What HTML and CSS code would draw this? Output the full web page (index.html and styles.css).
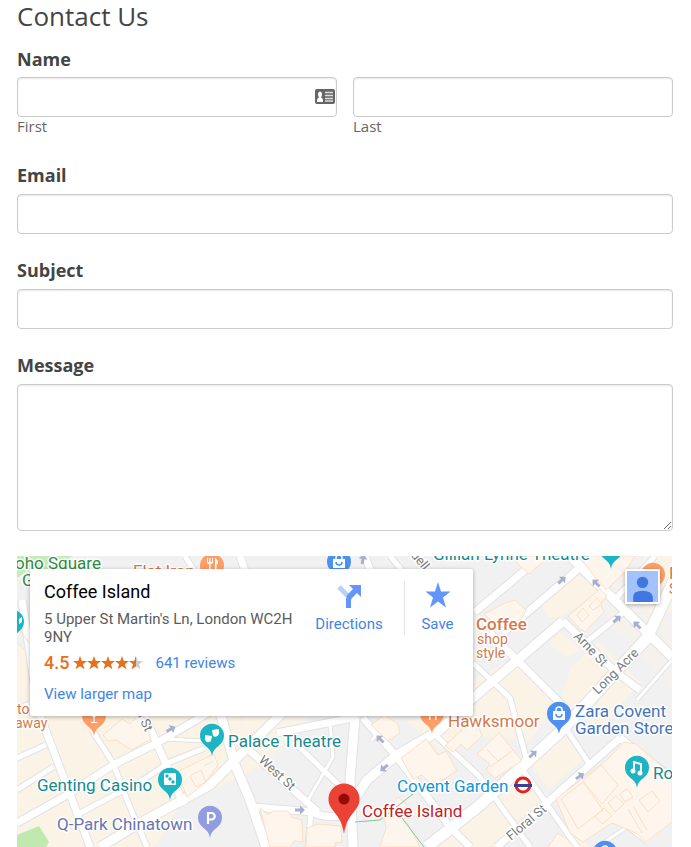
FILE: index.html
```html
<!DOCTYPE html>
<html lang="en">
  <head>
    <meta charset="UTF-8" />
    <meta name="viewport" content="width=device-width, initial-scale=1.0" />
    <title>Contact Us</title>
    <link rel="stylesheet" href="styles.css">
  </head>
  <body>
    <main class="page">
      <h1>Contact Us</h1>
      <form class="contact-form">
        <fieldset class="field">
          <legend>Name</legend>
          <div class="name-row">
            <div class="name-part">
              <input type="text" id="first" name="first" />
              <svg class="contact-icon" viewBox="0 0 20 15" aria-hidden="true">
                <rect width="20" height="15" rx="2" fill="#666" />
                <path d="M2 13V11Q2 9 4 8.500Q3 7 3 5Q3 2.500 5 2.500T7 5Q7 7 6 8.500Q8 9 8 11V13Z" fill="#fff" />
                <path d="M10 3.500h8M10 6.500h8M10 9.500h8M10 12h8" stroke="#ddd" stroke-width="1.300" />
              </svg>
              <label for="first">First</label>
            </div>
            <div class="name-part">
              <input type="text" id="last" name="last" />
              <label for="last">Last</label>
            </div>
          </div>
        </fieldset>
        <div class="field">
          <label for="email">Email</label>
          <input type="email" id="email" name="email" />
        </div>
        <div class="field">
          <label for="subject">Subject</label>
          <input type="text" id="subject" name="subject" />
        </div>
        <div class="field">
          <label for="message">Message</label>
          <textarea id="message" name="message"></textarea>
        </div>
      </form>

      <section class="map" aria-label="Map">
        <svg class="map-canvas" viewBox="17 556 655 291" preserveAspectRatio="xMinYMin slice">
          <defs>
            <path id="pin" d="M0 20C-1 14-3 13-7.500 9A12 12 0 1 1 7.500 9C3 13 1 14 0 20Z" />
            <path id="arrow" d="M-5 -1.500H0V-4.500L5 0L0 4.500V1.500H-5Z" />
            <g id="bag">
              <path d="M-6 -3H6V6H-6Z" fill="#fff" />
              <path d="M-3 -3V-4A3 3 0 0 1 3 -4V-3" fill="none" stroke="#fff" stroke-width="1.500" />
              <path d="M-3 0A3 3 0 0 0 3 0" fill="none" stroke="#4d90f0" stroke-width="1.500" />
            </g>
            <path id="fork" d="M-5 -6V-2Q-5 0-3 0V6H-1.500V0Q1 0 1 -2V-6H0V-2H-1.500V-6H-3V-2H-4V-6ZM3 -6Q6 -5 6 0H4.500V6H3Z" fill="#fff" />
          </defs>

          <!-- land -->
          <rect x="17" y="556" width="655" height="291" fill="#f1f1f2" />
          <g fill="#faf3e6">
            <path d="M17 640L30 655V700H235L255 770L180 805L155 847H17Z" />
            <path d="M242 717H310L262 765L244 775Z" />
            <path d="M541 606L576 574L604 592L560 617L548 617Z" />
            <path d="M560 632L583 650L566 657L549 644Z" />
            <path d="M571 667L598 642L640 682L600 730L560 700Z" />
            <path d="M473 680L520 656L560 700L530 740L460 735Z" />
            <path d="M526 756L565 732L585 758L548 790Z" />
            <path d="M435 847L525 770L545 800L500 847Z" />
            <path d="M600 600L624 576L672 625V690L612 625Z" opacity=".45" />
            <path d="M645 556H672V610L655 620L630 590Z" />
            <path d="M548 847L570 828L590 847Z" />
            <path d="M390 720H470L440 750L405 720Z" />
          </g>
          <path d="M17 835L39 826L49 842L46 847H17Z" fill="#bfe9ae" />
          <path d="M17 556H72L60 569H30L17 578Z" fill="#c8ebba" />

          <!-- roads, casing under the white fill -->
          <g class="road-edge">
            <path class="w4" d="M330 723L333 757L308 800M637 700L672 660M600 845L627 827L647 842M165 739L205 741M372 740L385 725" />
            <path class="w6" d="M17 758L46 745M17 790L53 767M80 813L143 780L170 762L205 748M297 745L342 788M433 733L480 777L530 847M523 770L577 847M567 730L590 765M473 663L510 698L528 765M92 730L113 763L127 800L147 847M308 847L311 812M583 645L625 611M617 597L655 556M185 556L200 580M390 556L410 580" />
            <path class="w8" d="M17 710L30 705M22 600L38 710L90 847M143 712L184 805M17 823L67 795L113 765L157 743L230 700M240 742L318 812M253 807L313 812Q325 820 350 814M277 733L357 717M363 718L397 757L450 827L470 847M475 612L542 556M503 633L583 565M490 633L563 706M563 621L617 673L640 690M497 847L620 738M620 738L672 778M365 556L372 575M240 556L248 580" />
            <path class="w10" d="M100 847L140 823L210 785L232 763L290 705M220 712L235 765L250 800L266 847M355 717L350 780L353 847M354 800L367 780L397 755L440 730L473 698L563 621M567 553L672 657" />
            <path class="w12" d="M427 847L480 805L560 732L590 700L647 638L675 578" />
          </g>
          <g class="road">
            <path class="w4" d="M330 723L333 757L308 800M637 700L672 660M600 845L627 827L647 842M165 739L205 741M372 740L385 725" />
            <path class="w6" d="M17 758L46 745M17 790L53 767M80 813L143 780L170 762L205 748M297 745L342 788M433 733L480 777L530 847M523 770L577 847M567 730L590 765M473 663L510 698L528 765M92 730L113 763L127 800L147 847M308 847L311 812M583 645L625 611M617 597L655 556M185 556L200 580M390 556L410 580" />
            <path class="w8" d="M17 710L30 705M22 600L38 710L90 847M143 712L184 805M17 823L67 795L113 765L157 743L230 700M240 742L318 812M253 807L313 812Q325 820 350 814M277 733L357 717M363 718L397 757L450 827L470 847M475 612L542 556M503 633L583 565M490 633L563 706M563 621L617 673L640 690M497 847L620 738M620 738L672 778M365 556L372 575M240 556L248 580" />
            <path class="w10" d="M100 847L140 823L210 785L232 763L290 705M220 712L235 765L250 800L266 847M355 717L350 780L353 847M354 800L367 780L397 755L440 730L473 698L563 621M567 553L672 657" />
            <path class="w12" d="M427 847L480 805L560 732L590 700L647 638L675 578" />
          </g>

          <!-- buildings -->
          <g class="building">
            <path d="M103 735L122 719L130 724L137 717H144L151 739L132 750L122 744L117 740L108 741Z" />
            <path d="M181 782L177 772L214 754L218 765L205 783L187 797Z" />
            <path d="M190 776L201 770L206 782L196 787ZM204 766L213 761" />
            <path d="M260 808L268 815L273 811L288 811L291 817L302 820L303 842L294 841L290 847H270Z" />
            <path d="M307 828L318 824L341 826L342 842L335 843V847H306Z" />
            <path d="M371 725L384 715L398 724L400 733L388 741Z" />
            <path d="M401 758L426 739L438 755L446 751L457 771L433 786L422 775L413 779Z" />
            <path d="M445 746L475 717L482 736L467 750L461 744L453 752Z" />
            <path d="M384 815L398 797L412 810L404 818L420 847H380L386 828Z" />
            <path d="M477 754L499 733L522 761L495 778L486 770L490 764Z" />
            <path d="M487 750L498 761L507 755M490 767L513 750" />
            <path d="M484 614L505 603L515 600L526 610L522 618L503 631Z" />
            <path d="M515 556H548L543 562L529 574L517 563Z" />
            <path d="M579 556H635L625 572L606 590L597 580Z" />
            <path d="M568 616L600 589L607 596L600 604L604 612L585 632L579 628Z" />
            <path d="M577 615L583 608L589 615L582 622ZM589 606L597 598L602 604L593 610Z" />
            <path d="M556 799L607 760L624 742L636 744L672 775V822L646 842L636 833L612 823L583 842L570 833Z" />
            <path d="M561 799L583 782L603 810L578 829ZM583 781L601 765L618 785L602 804ZM595 816L604 808L612 816L602 824ZM608 803L616 796L624 804L615 812ZM620 794L627 789L633 797L625 802ZM639 800L652 791L660 801L648 812ZM628 809L642 833M633 806L647 830" />
            <path d="M548 847L558 833L567 839L574 847" />
            <path d="M17 642L25 650M20 630L29 643" />
          </g>
          <path d="M355 822L380 820L413 794M402 818L424 847" fill="none" stroke="#82c99b" />

          <g fill="#a9afd0">
            <use href="#arrow" transform="translate(562 580) rotate(-42)" />
            <use href="#arrow" transform="translate(596 583) rotate(-135)" />
            <use href="#arrow" transform="translate(617 619) rotate(-42)" />
            <use href="#arrow" transform="translate(637 625) rotate(-135)" />
            <use href="#arrow" transform="translate(171 729) rotate(-28)" />
            <use href="#arrow" transform="translate(380 739) rotate(-135)" />
            <use href="#arrow" transform="translate(384 768) rotate(140)" />
            <use href="#arrow" transform="translate(300 810)" />
            <use href="#arrow" transform="translate(533 754) rotate(-42)" />
            <use href="#arrow" transform="translate(580 776) rotate(-35)" />
            <use href="#arrow" transform="translate(363 559) rotate(-80)" />
          </g>

          <!-- street names -->
          <g class="label street">
            <text transform="translate(258 761) rotate(43)">West St</text>
            <text transform="translate(573 637) rotate(46)">Arne St</text>
            <text transform="translate(598 695) rotate(-45)">Long Acre</text>
            <text transform="translate(511 841) rotate(-40)">Floral St</text>
            <text transform="translate(128 695) rotate(65)">Frith St</text>
            <text transform="translate(401 544) rotate(50)">Endell</text>
          </g>

          <!-- pins -->
          <g fill="#1cb5c4">
            <use href="#pin" x="212" y="736" />
            <use href="#pin" x="170" y="780" />
            <use href="#pin" x="637" y="768" />
            <use href="#pin" x="611" y="549" />
            <use href="#pin" x="12" y="622" />
          </g>
          <g fill="#ff9e67">
            <use href="#pin" x="94" y="716" />
            <use href="#pin" x="432" y="714" />
            <use href="#pin" x="212" y="566" />
            <use href="#pin" x="653" y="575" />
          </g>
          <g fill="#4d90f0">
            <use href="#pin" x="559" y="714" />
            <use href="#pin" x="339" y="562" />
            <use href="#pin" x="605" y="853" />
          </g>
          <use href="#pin" x="210" y="818" fill="#919ce1" />
          <use href="#bag" x="559" y="714" />
          <use href="#bag" x="339" y="562" />
          <use href="#bag" x="605" y="853" />
          <use href="#fork" x="212" y="564" />
          <use href="#fork" x="432" y="714" />
          <use href="#fork" x="653" y="575" />
          <path d="M90 714H98L94.500 718V722H97V723H91V722H93.500V718Z" fill="#fff" />
          <path d="M205 735L212 736L211 741Q207 744 205 740ZM212 730L219 729V734Q217 738 213 736Z" fill="#fff" />
          <rect x="164" y="773" width="12" height="12" rx="1" fill="#fff" />
          <g fill="#1cb5c4">
            <circle cx="167" cy="776" r="1.700" />
            <circle cx="170" cy="779" r="1.700" />
            <circle cx="173" cy="782" r="1.700" />
          </g>
          <path d="M634 771V762L641 764V773" fill="none" stroke="#fff" stroke-width="2" />
          <circle cx="633" cy="771" r="2.500" fill="#fff" />
          <circle cx="640" cy="773" r="2.500" fill="#fff" />
          <path d="M208 824V813H211.500A3 3 0 0 1 211.500 819.500H208" fill="none" stroke="#fff" stroke-width="2.200" />
          <path d="M19 619L22 617V622L19 624Z" fill="#fff" />

          <circle cx="523" cy="785" r="7" fill="#fff" stroke="#e32119" stroke-width="3" />
          <rect x="514" y="784" width="18" height="3" fill="#3a3f93" />

          <!-- place names -->
          <g class="label">
            <text x="15" y="569" class="park">oho Square</text>
            <text x="22" y="586" class="park">G</text>
            <text x="133" y="577" class="food">Flat Iron</text>
            <text x="433" y="560" class="culture">Gillian Lynne Theatre</text>
            <text x="476" y="630" class="food strong">Coffee</text>
            <text x="477" y="644" class="food small">shop</text>
            <text x="476" y="658" class="food small">style</text>
            <text x="669" y="579" class="food">F</text>
            <text x="669" y="594" class="food small">S</text>
            <text x="17" y="714" class="food small">to</text>
            <text x="15" y="728" class="food small">away</text>
            <text x="448" y="727" class="food">Hawksmoor</text>
            <text x="575" y="717" class="shop">Zara Covent</text>
            <text x="575" y="734" class="shop">Garden Store</text>
            <text x="228" y="747" class="culture">Palace Theatre</text>
            <text x="37" y="791" class="culture">Genting Casino</text>
            <text x="653" y="779" class="culture">Royal</text>
            <text x="57" y="830" class="parking">Q-Park Chinatown</text>
            <text x="397" y="792" class="station">Covent Garden</text>
            <text x="362" y="817" class="selected">Coffee Island</text>
          </g>

          <path d="M344 834C342 820 337 816 332 809C329 805 328.500 802 328.500 799A15.500 15.500 0 0 1 359.500 799C359.500 802 359 805 356 809C351 816 346 820 344 834Z" fill="#ea4335" />
          <circle cx="344" cy="799" r="5.500" fill="#960a0a" />
        </svg>

        <div class="place-card">
          <div class="place-info">
            <h2>Coffee Island</h2>
            <p class="address">5 Upper St Martin's Ln, London WC2H 9NY</p>
            <div class="rating">
              <strong>4.5</strong>
              <svg class="stars" viewBox="0 0 70 14" aria-label="4.5 stars">
                <defs>
                  <path id="star" d="M7 0L8.800 4.900L14 5L9.900 8.200L11.400 13.200L7 10.300L2.600 13.200L4.100 8.200L0 5L5.200 4.900Z" />
                </defs>
                <use href="#star" fill="#e7711b" />
                <use href="#star" x="14" fill="#e7711b" />
                <use href="#star" x="28" fill="#e7711b" />
                <use href="#star" x="42" fill="#e7711b" />
                <use href="#star" x="56" fill="#ccc" />
                <path d="M63 0V10.300L58.600 13.200L60.100 8.200L56 5L61.200 4.900Z" fill="#e7711b" />
              </svg>
              <a href="#">641 reviews</a>
            </div>
            <a href="#">View larger map</a>
          </div>
          <a class="action directions" href="#">
            <svg viewBox="0 0 26 26" aria-hidden="true">
              <path d="M3 5L12 14" stroke="#b9d0fb" stroke-width="5" />
              <path d="M10 26V17Q10 14 12 12L17 7L13 3H25V15L21 11L16 16Q15 17 15 19V26Z" fill="#6495fb" />
            </svg>
            Directions
          </a>
          <a class="action save" href="#">
            <svg viewBox="0 0 26 26" aria-hidden="true">
              <path d="M13 0L16 9.500H25.500L18 15.500L21 25.500L13 19.500L5 25.500L8 15.500L0.500 9.500H10Z" fill="#6495fb" />
            </svg>
            Save
          </a>
        </div>

        <button class="account" type="button" aria-label="Account">
          <svg viewBox="0 0 30 30" aria-hidden="true">
            <circle cx="15" cy="11" r="5.500" fill="#3f76e0" />
            <path d="M6 30V25Q6 19 15 19T25 25V30Z" fill="#3f76e0" />
          </svg>
        </button>
      </section>
    </main>
  </body>
</html>
```
FILE: styles.css
```css
* {
  box-sizing: border-box;
}

body {
  margin: 0;
  background: #fff;
  color: #444;
  font-family: "Open Sans", "Noto Sans", sans-serif;
}

.page {
  padding: 0 18px 0 17px;
}

h1 {
  margin: 0 0 16px;
  font-size: 26px;
  font-weight: 400;
  line-height: 32px;
}

.contact-form {
  display: flex;
  flex-direction: column;
  gap: 25px;
}

.field {
  display: flex;
  flex-direction: column;
  min-width: 0;
  margin: 0;
  padding: 0;
  border: 0;
}

.field > label,
.field legend {
  margin-bottom: 8px;
  padding: 0;
  font-size: 18px;
  font-weight: 700;
  line-height: 22px;
}

.field legend {
  margin-bottom: 7px;
}

.name-row {
  display: grid;
  grid-template-columns: 1fr 1fr;
  gap: 16px;
  padding-bottom: 4px;
}

.name-part {
  position: relative;
  display: flex;
  flex-direction: column;
}

.name-part label {
  color: #666;
  font-size: 15px;
  line-height: 18px;
}

.contact-icon {
  position: absolute;
  top: 12px;
  right: 2px;
  width: 20px;
  height: 15px;
}

input,
textarea {
  width: 100%;
  height: 40px;
  padding: 8px;
  border: 1px solid #ccc;
  border-radius: 4px;
  background: #fff;
  box-shadow: inset 0 1px 2px rgba(0, 0, 0, 0.1);
  font: inherit;
}

textarea {
  display: block;
  height: 147px;
  resize: vertical;
}

/* map */
.map {
  position: relative;
  height: 291px;
  margin: 25px 1px 0 0;
  overflow: hidden;
  font-family: Roboto, sans-serif;
}

.map-canvas {
  display: block;
  width: 100%;
  height: 100%;
}

.road,
.road-edge {
  fill: none;
  stroke: #fff;
  stroke-linejoin: round;
}

.road .w4 { stroke-width: 3px; }
.road .w6 { stroke-width: 5px; }
.road .w8 { stroke-width: 7px; }
.road .w10 { stroke-width: 9px; }
.road .w12 { stroke-width: 11px; }

.road-edge { stroke: #e2e2e5; }
.road-edge .w4 { stroke-width: 5px; }
.road-edge .w6 { stroke-width: 7px; }
.road-edge .w8 { stroke-width: 9px; }
.road-edge .w10 { stroke-width: 11px; }
.road-edge .w12 { stroke-width: 13px; }

.building {
  fill: #fef5ec;
  stroke: #fddfc3;
}

.label {
  font-size: 17px;
  stroke: #fff;
  stroke-width: 3px;
  stroke-linejoin: round;
  paint-order: stroke;
}

.label .small { font-size: 14px; }
.label .strong { font-weight: 500; }
.street { font-size: 13px; fill: #7b7b7b; }
.park { fill: #2e8b3d; }
.food { fill: #d37a4c; }
.culture { fill: #168a8f; }
.shop { fill: #4374b8; }
.parking { fill: #6b75b0; }
.station { fill: #1195d3; }
.selected { fill: #c5221f; }

.place-card {
  position: absolute;
  top: 13px;
  left: 13px;
  display: flex;
  width: 443px;
  max-width: calc(100% - 26px);
  padding: 12px 3px 13px 14px;
  border-radius: 2px;
  background: #fff;
  box-shadow: 0 1px 4px rgba(0, 0, 0, 0.3);
  color: #5b5b5b;
  font-size: 15px;
  line-height: 18px;
}

.place-card a {
  color: #4285e4;
  text-decoration: none;
}

.place-info {
  flex: 1;
}

.place-info h2 {
  margin: 0 0 7px;
  color: #000;
  font-size: 18px;
  font-weight: 400;
  line-height: 22px;
}

.address {
  margin: 0;
}

.rating {
  display: flex;
  align-items: center;
  gap: 4px;
  height: 18px;
  margin: 8px 0 13px;
}

.rating strong {
  color: #e7711b;
  font-size: 18px;
  font-weight: 500;
}

.rating a {
  margin-left: 8px;
}

.stars {
  width: 70px;
  height: 14px;
}

.action {
  display: flex;
  flex-direction: column;
  align-items: center;
  gap: 7px;
  height: 54px;
  padding-top: 1px;
}

.action svg {
  width: 26px;
  height: 26px;
}

.directions {
  width: 110px;
}

.save {
  width: 66px;
  border-left: 1px solid #e5e5e5;
}

.account {
  position: absolute;
  top: 13px;
  right: 12px;
  width: 35px;
  height: 35px;
  padding: 0;
  border: 2px solid #fff;
  background: #a1c2fa;
  box-shadow: 0 1px 4px rgba(0, 0, 0, 0.3);
}

.account svg {
  display: block;
  width: 100%;
}
```
